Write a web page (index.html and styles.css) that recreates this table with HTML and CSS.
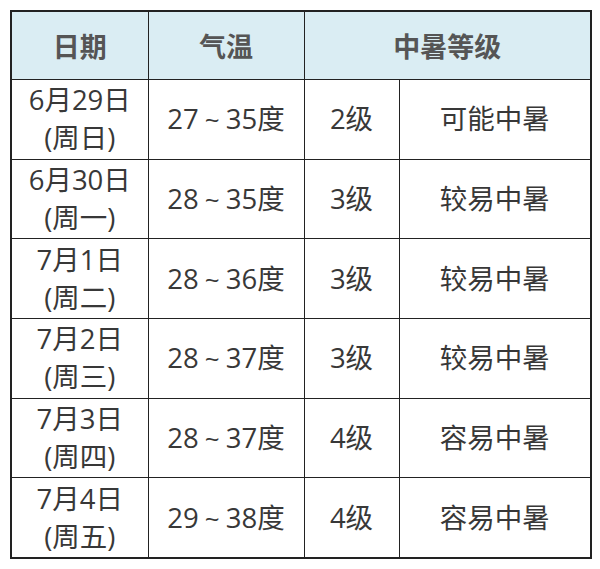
FILE: index.html
```html
<!DOCTYPE html>
<html lang="zh-CN">
<head>
<meta charset="utf-8">
<link rel="stylesheet" href="styles.css">
</head>
<body>
<table class="heat">
  <colgroup>
    <col class="c1"><col class="c2"><col class="c3"><col class="c4">
  </colgroup>
  <thead>
    <tr class="head"><th>日期</th><th>气温</th><th colspan="2">中暑等级</th></tr>
  </thead>
  <tbody>
    <tr><td>6月29日<br>(周日)</td><td>27<span class="tilde">~</span>35度</td><td>2级</td><td>可能中暑</td></tr>
    <tr><td>6月30日<br>(周一)</td><td>28<span class="tilde">~</span>35度</td><td>3级</td><td>较易中暑</td></tr>
    <tr><td>7月1日<br>(周二)</td><td>28<span class="tilde">~</span>36度</td><td>3级</td><td>较易中暑</td></tr>
    <tr><td>7月2日<br>(周三)</td><td>28<span class="tilde">~</span>37度</td><td>3级</td><td>较易中暑</td></tr>
    <tr><td>7月3日<br>(周四)</td><td>28<span class="tilde">~</span>37度</td><td>4级</td><td>容易中暑</td></tr>
    <tr><td>7月4日<br>(周五)</td><td>29<span class="tilde">~</span>38度</td><td>4级</td><td>容易中暑</td></tr>
  </tbody>
</table>
</body>
</html>
```
FILE: styles.css
```css
html, body {
  margin: 0;
  padding: 0;
  background: #fff;
}
body {
  padding: 10px 0 0 10px;
  font-family: "Open Sans", "Noto Sans CJK SC", sans-serif;
  color: #333;
}
.heat {
  border-collapse: collapse;
  width: 580px;
  table-layout: fixed;
  border: 2px solid #222;
}
.c1 { width: 137px; }
.c2 { width: 156px; }
.c3 { width: 95px; }
.c4 { width: 192px; }
.heat th, .heat td {
  border: 1.5px solid #222;
  text-align: center;
  vertical-align: middle;
  padding: 0;
}
.head th {
  height: 67px;
  background: #daedf3;
  color: #555;
  font-weight: bold;
  font-size: 27px;
}
.heat td {
  height: 78.7px;
  font-size: 27.5px;
  line-height: 38px;
  color: #383838;
}
.tilde {
  display: inline-block;
  margin: 0 6px;
  font-size: 26px;
}
```
